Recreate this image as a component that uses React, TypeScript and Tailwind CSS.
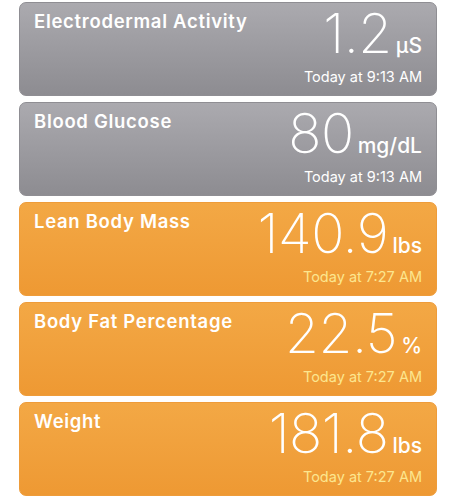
import React from "react";

type Item = {
  title: string;
  value: string;
  unit: string;
  time: string;
  kind: "gray" | "orange";
};

const items: Item[] = [
  { title: "Electrodermal Activity", value: "1.2", unit: "µS", time: "Today at 9:13 AM", kind: "gray" },
  { title: "Blood Glucose", value: "80", unit: "mg/dL", time: "Today at 9:13 AM", kind: "gray" },
  { title: "Lean Body Mass", value: "140.9", unit: "lbs", time: "Today at 7:27 AM", kind: "orange" },
  { title: "Body Fat Percentage", value: "22.5", unit: "%", time: "Today at 7:27 AM", kind: "orange" },
  { title: "Weight", value: "181.8", unit: "lbs", time: "Today at 7:27 AM", kind: "orange" },
];

function Card({ item }: { item: Item }) {
  const gray = item.kind === "gray";
  return (
    <div
      className={
        gray
          ? "relative h-[94px] rounded-[7px] border border-[#8f8e93] bg-gradient-to-b from-[#abaaaf] to-[#8d8c91]"
          : "relative h-[94px] rounded-[7px] border border-[#ee9c3a] bg-gradient-to-b from-[#f3a845] to-[#ee9933]"
      }
    >
      <div className="flex h-full justify-between pl-[14px] pr-[14px]">
        <div className="pt-[5px] text-[18.5px] font-semibold leading-[26px] tracking-[0.7px] text-white [font-family:Inter,'Noto_Sans',sans-serif]">
          {item.title}
        </div>
        <div className="flex flex-col items-end">
          <div className="flex items-baseline text-white [font-family:Inter,sans-serif]">
            <span className="text-[55px] font-extralight leading-[60px] tracking-[-0.5px]">{item.value}</span>
            <span className="ml-[4px] text-[21px] font-medium leading-none">{item.unit}</span>
          </div>
          <div
            className={
              gray
                ? "mt-[5px] text-[14.5px] leading-[18px] text-white [font-family:Inter,sans-serif]"
                : "mt-[5px] text-[14.5px] leading-[18px] text-[#fce68f] [font-family:Inter,sans-serif]"
            }
          >
            {item.time}
          </div>
        </div>
      </div>
    </div>
  );
}

export default function App() {
  return (
    <div className="h-[500px] w-[456px] bg-white pt-[2px]">
      <div className="mx-[19px] flex flex-col gap-[6px]">
        {items.map((it) => (
          <Card key={it.title} item={it} />
        ))}
      </div>
    </div>
  );
}
